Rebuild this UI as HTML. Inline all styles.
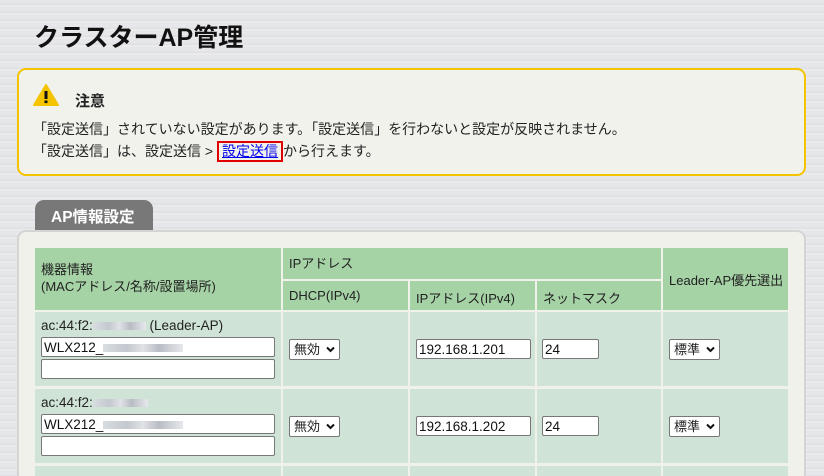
<!DOCTYPE html>
<html><head><meta charset="utf-8"><style>
*{box-sizing:border-box;margin:0;padding:0}
html,body{width:824px;height:476px;overflow:hidden}
body{position:relative;font-family:"Liberation Sans","Noto Sans CJK JP",sans-serif;color:#222;
background:repeating-linear-gradient(180deg,#e6e7ea 0,#e6e7ea 3px,#dcdde1 4px,#eeeef0 6px,#e3e4e7 8px);}
.a{position:absolute}
h1{position:absolute;left:34px;top:18px;font-size:25px;font-weight:bold;color:#111}
.note{left:17px;top:68px;width:789px;height:108px;border:2px solid #f5c400;border-radius:9px;background:#f2f2ed}
.note .t{position:absolute;left:56px;top:20px;font-weight:bold;font-size:15px}
.note .l{position:absolute;left:14px;font-size:14px;color:#222;white-space:nowrap}
.tab{left:35px;top:200px;width:118px;height:30px;background:#787878;border-radius:9px 9px 0 0;color:#fff;font-weight:bold;font-size:15.5px;padding:5px 0 0 16px}
.panel{left:17px;top:230px;width:789px;height:260px;background:#f1f1ec;border:2px solid #d4d4d4;border-radius:9px}
.c{position:absolute;font-size:13px;color:#222}
.h{background:#a6d3a6}
.d{background:#cfe4d6}
.inp{position:absolute;height:20px;background:#fff;border:1px solid #777;border-radius:2px;font-size:13.5px;padding:1px 2px;color:#111;line-height:17px}
.sel{position:absolute;height:21px;background:#fff;border:1px solid #777;border-radius:2px;font-size:13px;padding:1px 4px;line-height:17px}
.sel svg{position:absolute;right:4px;top:6px}
.blur{display:inline-block;vertical-align:middle;height:8px;background:linear-gradient(90deg,#d8dde0,#c4c8cf 30%,#e0e2e6 50%,#b9bcc4 70%,#e6e8ec)}
</style></head><body>
<h1>クラスターAP管理</h1>
<div class="a note">
<svg class="a" style="left:14px;top:14px" width="26" height="22" viewBox="0 0 26 22"><path d="M13 1 L25 21 L1 21 Z" fill="#f5c400" stroke="#f5c400" stroke-linejoin="round" stroke-width="2"/><rect x="11.5" y="7" width="3" height="8" fill="#111"/><rect x="11.5" y="16.5" width="3" height="2.6" fill="#111"/></svg>
<div class="t">注意</div>
<div class="l" style="top:49px">「設定送信」されていない設定があります。「設定送信」を行わないと設定が反映されません。</div>
<div class="l" style="top:71px">「設定送信」は、設定送信 &gt; <span style="display:inline-block;border:2px solid #e00000;padding:0 3px;margin:-3px 0;line-height:17px"><span style="color:#0000ee;text-decoration:underline">設定送信</span></span>から行えます。</div>
</div>
<div class="a tab">AP情報設定</div>
<div class="a panel"></div>
<div class="c h" style="left:35px;top:248px;width:246px;height:62px;padding:13px 0 0 6px;line-height:17px">機器情報<br>(MACアドレス/名称/設置場所)</div>
<div class="c h" style="left:283px;top:248px;width:378px;height:31px;padding:5px 0 0 6px">IPアドレス</div>
<div class="c h" style="left:283px;top:281px;width:125px;height:29px;padding:7px 0 0 6px">DHCP(IPv4)</div>
<div class="c h" style="left:410px;top:281px;width:125px;height:29px;padding:7px 0 0 6px">IPアドレス(IPv4)</div>
<div class="c h" style="left:537px;top:281px;width:124px;height:29px;padding:7px 0 0 6px">ネットマスク</div>
<div class="c h" style="left:663px;top:248px;width:125px;height:62px;padding:22px 0 0 6px">Leader-AP優先選出</div>
<div class="c d" style="left:35px;top:312px;width:246px;height:74px"></div>
<div class="c d" style="left:283px;top:312px;width:125px;height:74px"></div>
<div class="c d" style="left:410px;top:312px;width:125px;height:74px"></div>
<div class="c d" style="left:537px;top:312px;width:124px;height:74px"></div>
<div class="c d" style="left:663px;top:312px;width:125px;height:74px"></div>
<div class="c d" style="left:35px;top:389px;width:246px;height:74px"></div>
<div class="c d" style="left:283px;top:389px;width:125px;height:74px"></div>
<div class="c d" style="left:410px;top:389px;width:125px;height:74px"></div>
<div class="c d" style="left:537px;top:389px;width:124px;height:74px"></div>
<div class="c d" style="left:663px;top:389px;width:125px;height:74px"></div>
<div class="c d" style="left:35px;top:466px;width:246px;height:20px"></div>
<div class="c d" style="left:283px;top:466px;width:125px;height:20px"></div>
<div class="c d" style="left:410px;top:466px;width:125px;height:20px"></div>
<div class="c d" style="left:537px;top:466px;width:124px;height:20px"></div>
<div class="c d" style="left:663px;top:466px;width:125px;height:20px"></div>
<div class="c" style="left:41px;top:318px;font-size:13.5px">ac:44:f2:<span class="blur" style="width:53px"></span> (Leader-AP)</div>
<div class="inp" style="left:41px;top:337px;width:234px">WLX212_<span class="blur" style="width:80px"></span></div>
<div class="inp" style="left:41px;top:359px;width:234px"></div>
<div class="sel" style="left:289px;top:339px;width:51px">無効<svg width="9" height="7" viewBox="0 0 9 7"><path d="M1 1.5 L4.5 5 L8 1.5" fill="none" stroke="#111" stroke-width="2"/></svg></div>
<div class="inp" style="left:416px;top:339px;width:115px">192.168.1.201</div>
<div class="inp" style="left:542px;top:339px;width:57px">24</div>
<div class="sel" style="left:669px;top:339px;width:51px">標準<svg width="9" height="7" viewBox="0 0 9 7"><path d="M1 1.5 L4.5 5 L8 1.5" fill="none" stroke="#111" stroke-width="2"/></svg></div>
<div class="c" style="left:41px;top:395px;font-size:13.5px">ac:44:f2:<span class="blur" style="width:55px"></span></div>
<div class="inp" style="left:41px;top:414px;width:234px">WLX212_<span class="blur" style="width:80px"></span></div>
<div class="inp" style="left:41px;top:436px;width:234px"></div>
<div class="sel" style="left:289px;top:416px;width:51px">無効<svg width="9" height="7" viewBox="0 0 9 7"><path d="M1 1.5 L4.5 5 L8 1.5" fill="none" stroke="#111" stroke-width="2"/></svg></div>
<div class="inp" style="left:416px;top:416px;width:115px">192.168.1.202</div>
<div class="inp" style="left:542px;top:416px;width:57px">24</div>
<div class="sel" style="left:669px;top:416px;width:51px">標準<svg width="9" height="7" viewBox="0 0 9 7"><path d="M1 1.5 L4.5 5 L8 1.5" fill="none" stroke="#111" stroke-width="2"/></svg></div>
</body></html>
